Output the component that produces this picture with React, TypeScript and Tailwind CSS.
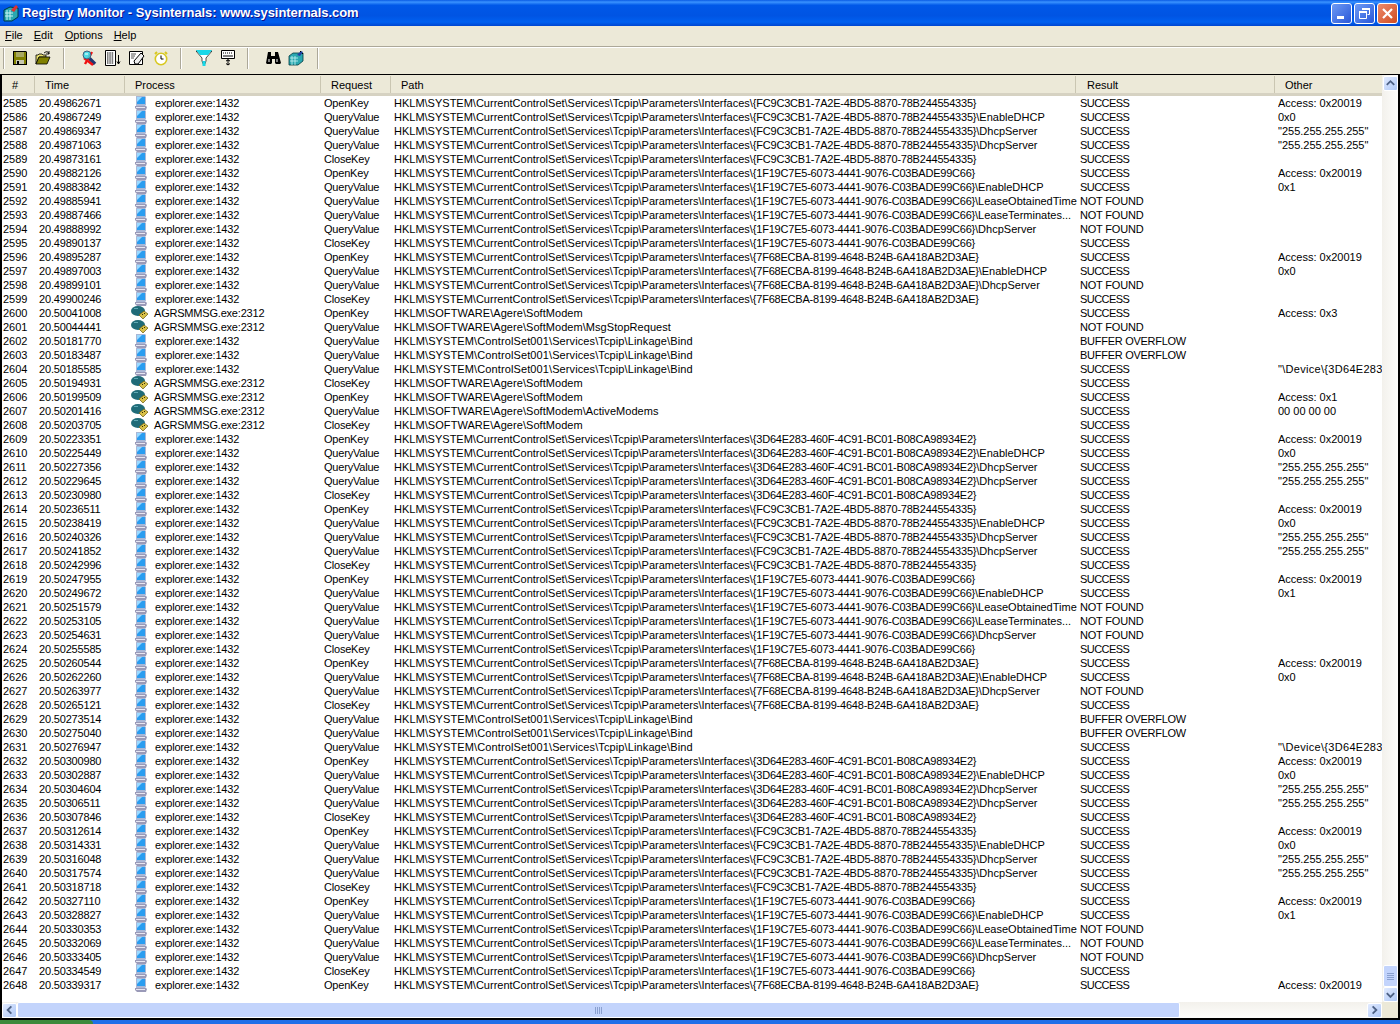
import React from 'react';

const FC = 'FC9C3CB1-7A2E-4BD5-8870-78B244554335';
const F1 = '1F19C7E5-6073-4441-9076-C03BADE99C66';
const F7 = '7F68ECBA-8199-4648-B24B-6A418AB2D3AE';
const D3 = '3D64E283-460F-4C91-BC01-B08CA98934E2';
const IFACE = 'HKLM\\SYSTEM\\CurrentControlSet\\Services\\Tcpip\\Parameters\\Interfaces\\';
const BIND = 'HKLM\\SYSTEM\\ControlSet001\\Services\\Tcpip\\Linkage\\Bind';
const MODEM = 'HKLM\\SOFTWARE\\Agere\\SoftModem';
const ACCESS = 'Access: 0x20019';
const IP = '"255.255.255.255"';
const DEV = '"\\Device\\{3D64E283';
const OK = 'SUCCESS';
const NF = 'NOT FOUND';
const BO = 'BUFFER OVERFLOW';

type Row = { t: string; agr?: boolean; req: string; guid?: string; path: string; suffix?: string; res: string; other: string };

const open = (t: string, g: string): Row => ({ t, req: 'OpenKey', path: IFACE, guid: g, res: OK, other: ACCESS });
const close = (t: string, g: string): Row => ({ t, req: 'CloseKey', path: IFACE, guid: g, res: OK, other: '' });
const val = (t: string, g: string, s: string, res = OK, other = ''): Row => ({ t, req: 'QueryValue', path: IFACE, guid: g, suffix: s, res, other });
const bind = (t: string, res: string, other = ''): Row => ({ t, req: 'QueryValue', path: BIND, res, other });
const agr = (t: string, req: string, s: string, res = OK, other = ''): Row => ({ t, agr: true, req, path: MODEM + s, res, other });

const EN = '\\EnableDHCP';
const DH = '\\DhcpServer';
const LO = '\\LeaseObtainedTime';
const LT = '\\LeaseTerminates...';

const rows: Row[] = [
  open('49862671', FC), val('49867249', FC, EN, OK, '0x0'), val('49869347', FC, DH, OK, IP), val('49871063', FC, DH, OK, IP), close('49873161', FC),
  open('49882126', F1), val('49883842', F1, EN, OK, '0x1'), val('49885941', F1, LO, NF), val('49887466', F1, LT, NF), val('49888992', F1, DH, NF), close('49890137', F1),
  open('49895287', F7), val('49897003', F7, EN, OK, '0x0'), val('49899101', F7, DH, NF), close('49900246', F7),
  agr('50041008', 'OpenKey', '', OK, 'Access: 0x3'), agr('50044441', 'QueryValue', '\\MsgStopRequest', NF),
  bind('50181770', BO), bind('50183487', BO), bind('50185585', OK, DEV),
  agr('50194931', 'CloseKey', ''), agr('50199509', 'OpenKey', '', OK, 'Access: 0x1'), agr('50201416', 'QueryValue', '\\ActiveModems', OK, '00 00 00 00'), agr('50203705', 'CloseKey', ''),
  open('50223351', D3), val('50225449', D3, EN, OK, '0x0'), val('50227356', D3, DH, OK, IP), val('50229645', D3, DH, OK, IP), close('50230980', D3),
  open('50236511', FC), val('50238419', FC, EN, OK, '0x0'), val('50240326', FC, DH, OK, IP), val('50241852', FC, DH, OK, IP), close('50242996', FC),
  open('50247955', F1), val('50249672', F1, EN, OK, '0x1'), val('50251579', F1, LO, NF), val('50253105', F1, LT, NF), val('50254631', F1, DH, NF), close('50255585', F1),
  open('50260544', F7), val('50262260', F7, EN, OK, '0x0'), val('50263977', F7, DH, NF), close('50265121', F7),
  bind('50273514', BO), bind('50275040', BO), bind('50276947', OK, DEV),
  open('50300980', D3), val('50302887', D3, EN, OK, '0x0'), val('50304604', D3, DH, OK, IP), val('50306511', D3, DH, OK, IP), close('50307846', D3),
  open('50312614', FC), val('50314331', FC, EN, OK, '0x0'), val('50316048', FC, DH, OK, IP), val('50317574', FC, DH, OK, IP), close('50318718', FC),
  open('50327110', F1), val('50328827', F1, EN, OK, '0x1'), val('50330353', F1, LO, NF), val('50332069', F1, LT, NF), val('50333405', F1, DH, NF), close('50334549', F1),
  open('50339317', F7),
];

function ExplorerIcon() {
  return (
    <svg width="12" height="14" viewBox="0 0 12 14" className="shrink-0">
      <path d="M1 0h9l1 1v8l-1 1H1z" fill="#a9b7d6" />
      <path d="M2 1h8v7H2z" fill="#2a9df0" />
      <path d="M2 1h5L2 6z" fill="#9bd9ff" />
      <path d="M0 10h11l1 1-1 3H2l-2-2z" fill="#9a9ab8" />
      <path d="M1 11h9v1H1z" fill="#e6e6f2" />
    </svg>
  );
}

function ModemIcon() {
  return (
    <svg width="18" height="14" viewBox="0 0 18 14" className="shrink-0">
      <ellipse cx="7" cy="5" rx="7" ry="5" fill="#1f6b78" />
      <path d="M3 2h4v1H3z" fill="#5fa8b4" />
      <path d="M8 9l5-4 4 3-5 5z" fill="#d8c048" stroke="#6a5a10" strokeWidth="0.7" />
      <path d="M11 8h1v1h-1zM13 7h1v1h-1z" fill="#332a00" />
    </svg>
  );
}

function ToolSep() {
  return <div className="w-[2px] h-[21px] border-l border-[#aca899] border-r-[#fff] border-r shrink-0" />;
}

function Tool({ children }: { children: React.ReactNode }) {
  return <div className="w-[16px] h-[16px] shrink-0 flex items-center justify-center">{children}</div>;
}

function Toolbar() {
  return (
    <div className="h-[26px] shrink-0 flex items-center pl-[3px] pb-[6px]">
      <ToolSep />
      <div className="flex gap-[7px] ml-[7px]">
        <Tool>
          <svg width="16" height="16" viewBox="0 0 16 16">
            <path d="M1 1h13l1 1v13H1z" fill="#000" />
            <path d="M2 2h12v12H2z" fill="#808000" />
            <path d="M4 2h8v5H4z" fill="#a8a860" />
            <path d="M4 10h8v4H4z" fill="#c8c8b0" />
            <path d="M5 11h2v3H5z" fill="#000" />
          </svg>
        </Tool>
        <Tool>
          <svg width="16" height="16" viewBox="0 0 16 16">
            <path d="M1 5h2l1-1h3l1 1h3v2H4l-3 7z" fill="#e8e070" stroke="#000" strokeWidth="0.8" />
            <path d="M1 14l3-7h11l-3 7z" fill="#808000" stroke="#000" strokeWidth="0.8" />
            <path d="M9 3q2-2 4-1l1 2M14 1v3h-3" fill="none" stroke="#000" strokeWidth="0.9" />
          </svg>
        </Tool>
      </div>
      <div className="ml-[12px]"><ToolSep /></div>
      <div className="flex gap-[8px] ml-[16px]">
        <Tool>
          <svg width="16" height="16" viewBox="0 0 16 16">
            <path d="M8 8l6 6" stroke="#203870" strokeWidth="3.5" />
            <path d="M3 8l9 7M11 2L4 14" stroke="#f01010" strokeWidth="2.4" />
            <circle cx="6" cy="5" r="4" fill="#30d8e8" fillOpacity="0.85" stroke="#406080" />
            <path d="M4 4h3" stroke="#fff" />
          </svg>
        </Tool>
        <Tool>
          <svg width="16" height="16" viewBox="0 0 16 16">
            <path d="M0.5 0.5h10v15h-10z" fill="#fff" stroke="#000" />
            <path d="M2 3h7M2 5h7M2 7h7M2 9h7M2 11h7M2 13h7" stroke="#000" strokeDasharray="1.5 0.8" />
            <path d="M13.5 5v9M12 11.5l1.5 2.5 1.5-2.5" stroke="#000" fill="none" />
          </svg>
        </Tool>
        <Tool>
          <svg width="16" height="16" viewBox="0 0 16 16">
            <path d="M0.5 1.5h13v13h-13z" fill="#fff" stroke="#000" />
            <path d="M2 4h5M2 6h4M2 8h3" stroke="#555" />
            <path d="M5 11l7-8 3 3-6 8H6z" fill="#f0f0f0" stroke="#000" />
          </svg>
        </Tool>
        <Tool>
          <svg width="16" height="16" viewBox="0 0 16 16">
            <circle cx="8" cy="9" r="5.7" fill="#fff" stroke="#d8c820" strokeWidth="1.6" />
            <path d="M8 5.5V9h2.5" stroke="#000" fill="none" />
            <path d="M2 4l2-2M14 4l-2-2" stroke="#d8c820" strokeWidth="2" />
          </svg>
        </Tool>
      </div>
      <div className="ml-[11px]"><ToolSep /></div>
      <div className="flex gap-[8px] ml-[14px]">
        <Tool>
          <svg width="16" height="16" viewBox="0 0 16 16">
            <path d="M0 1h16l-6 7v3L8 16l-2-5V8z" fill="#fff" stroke="#000" strokeWidth="0.7" />
            <path d="M0 0h16l-4 5H4z" fill="#18d8e8" />
            <path d="M6.5 11h3v5h-3z" fill="#18d8e8" />
          </svg>
        </Tool>
        <Tool>
          <svg width="16" height="16" viewBox="0 0 16 16">
            <path d="M1.5 0.5h13v8h-13z" fill="#fff" stroke="#000" />
            <path d="M3 3h1M5 3h1M7 3h1M9 3h1M11 3h1M3 6h10" stroke="#000" />
            <path d="M8 9v6M6 11l2-1 2 1M6 13.5l2 1.5 2-1.5" stroke="#000" fill="none" />
          </svg>
        </Tool>
      </div>
      <div className="ml-[11px]"><ToolSep /></div>
      <div className="flex gap-[7px] ml-[16px]">
        <Tool>
          <svg width="16" height="16" viewBox="0 0 16 16">
            <path d="M3 2h3v4h4V2h3l3 11-1 1h-4l-1-1V9H7v4l-1 1H2l-1-1z" fill="#000" />
            <path d="M3 9h2v3H3zM11 9h2v3h-2z" fill="#808080" />
          </svg>
        </Tool>
        <Tool>
          <svg width="16" height="16" viewBox="0 0 16 16">
            <path d="M1 6l4-3 10 0v8l-5 4H1z" fill="#2aa8b0" stroke="#003840" strokeWidth="0.8" />
            <path d="M2 8h8M2 11h8M4 6v9M7 6v9" stroke="#c8f4f4" strokeWidth="0.8" />
            <path d="M9 5l4-4 2 1-3 4z" fill="#2040a0" />
            <path d="M12 1h1v1h-1zM14 3h1v1h-1z" fill="#000" />
          </svg>
        </Tool>
      </div>
      <div className="ml-[13px]"><ToolSep /></div>
    </div>
  );
}

function Th({ w, pl, label, last }: { w: string; pl: string; label: string; last?: boolean }) {
  return (
    <div className={`${w} ${pl} h-[17px] mt-[1px] shrink-0 overflow-hidden whitespace-nowrap leading-[18px] ${last ? '' : 'border-r border-r-[#cac6b2]'}`}>
      {label}
    </div>
  );
}

function Chevron({ dir }: { dir: 'up' | 'down' | 'left' | 'right' }) {
  const d = {
    up: 'M3 8l4-4 4 4',
    down: 'M3 5l4 4 4-4',
    left: 'M9 3L5 7l4 4',
    right: 'M5 3l4 4-4 4',
  }[dir];
  return (
    <svg width="14" height="14" viewBox="0 0 14 14">
      <path d={d} fill="none" stroke="#4d6185" strokeWidth="2" />
    </svg>
  );
}

function ScrollBtn({ dir }: { dir: 'up' | 'down' | 'left' | 'right' }) {
  return (
    <div className="w-[15px] h-[15px] shrink-0 rounded-[2px] border border-white bg-gradient-to-br from-[#e1eafe] to-[#aec8f7] flex items-center justify-center">
      <Chevron dir={dir} />
    </div>
  );
}

function resultClass(res: string) {
  if (res === OK) return 'tracking-[-0.55px]';
  if (res === NF) return 'tracking-[-0.2px]';
  return 'tracking-[-0.27px]';
}

export default function App() {
  return (
    <div className="w-[1400px] h-[1024px] overflow-hidden flex flex-col bg-[#ece9d8] text-black text-[11px] font-['Liberation_Sans',sans-serif]">
      {/* title bar */}
      <div className="h-[26px] shrink-0 flex items-center pl-[2px] pr-[2px] bg-[linear-gradient(180deg,#0a5be4_0%,#3a93ff_8%,#0058e8_20%,#0054e3_60%,#0060f0_85%,#0046d0_100%)]">
        <svg width="18" height="18" viewBox="0 0 18 18" className="shrink-0">
          <path d="M2 6l6-3 8 1v9l-6 4H2z" fill="#2aa8b0" stroke="#003840" />
          <path d="M3 9h8M3 12h8M5 6v10M8 6v10" stroke="#c8f4f4" />
          <path d="M9 6l5-5 2 2-4 5z" fill="#e03030" />
        </svg>
        <div className="ml-[2px] flex-1 text-white font-bold text-[13px] tracking-[-0.06px] [text-shadow:1px_1px_0_#0f1089]">
          Registry Monitor - Sysinternals: www.sysinternals.com
        </div>
        <div className="flex gap-[2px]">
          <div className="w-[21px] h-[21px] rounded-[3px] border border-white bg-gradient-to-br from-[#6f9af4] to-[#2a56d8] relative flex items-end pl-[5px] pb-[4px]">
            <div className="w-[7px] h-[3px] bg-white" />
          </div>
          <div className="w-[21px] h-[21px] rounded-[3px] border border-white bg-gradient-to-br from-[#6f9af4] to-[#2a56d8] flex items-center justify-center">
            <svg width="13" height="13" viewBox="0 0 13 13">
              <path d="M4.5 1.5h7v6h-2M1.5 4.5h7v7h-7z" fill="none" stroke="#fff" />
              <path d="M4 1h8v2H4zM1 4h8v2H1z" fill="#fff" />
            </svg>
          </div>
          <div className="w-[21px] h-[21px] rounded-[3px] border border-white bg-gradient-to-br from-[#ec8a6a] to-[#d04a1c] flex items-center justify-center">
            <svg width="13" height="13" viewBox="0 0 13 13">
              <path d="M2 2l9 9M11 2l-9 9" stroke="#fff" strokeWidth="2.2" />
            </svg>
          </div>
        </div>
      </div>

      {/* menu */}
      <div className="h-[20px] shrink-0 flex items-center pl-[5px] pb-[2px]">
        <span><u>F</u>ile</span>
        <span className="ml-[11px]"><u>E</u>dit</span>
        <span className="ml-[12px]"><u>O</u>ptions</span>
        <span className="ml-[11px]"><u>H</u>elp</span>
      </div>
      <div className="h-[2px] shrink-0 border-t border-[#aca899] border-b border-b-white" />

      <Toolbar />

      {/* list view */}
      <div className="flex-1 min-h-0 border-t border-t-black border-l-2 border-l-black border-r-2 border-r-black border-b-2 border-b-black flex flex-col">
        <div className="flex-1 min-h-0 flex">
          <div className="flex-1 min-w-0 flex flex-col">
            <div className="h-[21px] shrink-0 flex bg-[#ece9d8] border-b-[3px] border-[#d6d2c2]">
              <Th w="w-[33px]" pl="pl-[10px]" label="#" />
              <Th w="w-[90px]" pl="pl-[10px]" label="Time" />
              <Th w="w-[196px]" pl="pl-[10px]" label="Process" />
              <Th w="w-[70px]" pl="pl-[10px]" label="Request" />
              <Th w="w-[685px]" pl="pl-[10px]" label="Path" />
              <Th w="w-[199px]" pl="pl-[11px]" label="Result" />
              <Th w="w-[107px]" pl="pl-[10px]" label="Other" last />
            </div>
            <div className="flex-1 min-h-0 bg-white overflow-hidden">
              {rows.map((r, i) => (
                <div key={r.t} className="h-[14px] flex items-center whitespace-nowrap leading-[14px]">
                  <div className="w-[37px] pl-[1px] shrink-0">{2585 + i}</div>
                  <div className="w-[94px] shrink-0 tracking-[-0.18px]">20.{r.t}</div>
                  <div className="w-[191px] shrink-0 flex items-center">
                    {r.agr ? (
                      <div className="-ml-[2px] mr-[5px] shrink-0"><ModemIcon /></div>
                    ) : (
                      <div className="ml-[2px] w-[12px] mr-[8px] shrink-0"><ExplorerIcon /></div>
                    )}
                    <span className="tracking-[-0.2px]">{r.agr ? 'AGRSMMSG.exe:2312' : 'explorer.exe:1432'}</span>
                  </div>
                  <div className="w-[70px] shrink-0 tracking-[-0.2px]">{r.req}</div>
                  <div className="w-[686px] shrink-0 overflow-hidden">
                    {r.guid ? (
                      <>
                        {r.path}
                        <span className="tracking-[-0.22px]">{'{' + r.guid + '}'}</span>
                        {r.suffix}
                      </>
                    ) : (
                      <span className={r.path === BIND ? 'tracking-[0.11px]' : 'tracking-[0.05px]'}>{r.path}</span>
                    )}
                  </div>
                  <div className={`w-[198px] shrink-0 ${resultClass(r.res)}`}>{r.res}</div>
                  <div className={`w-[105px] shrink-0 overflow-hidden ${r.other === DEV ? 'tracking-[0.3px]' : ''}`}>{r.other}</div>
                </div>
              ))}
            </div>
          </div>
          {/* vertical scrollbar */}
          <div className="w-[16px] shrink-0 bg-gradient-to-r from-[#f3f1ec] to-[#fdfdfb] flex flex-col items-center pt-[1px]">
            <ScrollBtn dir="up" />
            <div className="flex-1" />
            <div className="w-[15px] h-[22px] rounded-[2px] border border-white bg-[#c3d4fc] flex flex-col items-center justify-center gap-[1px]">
              <div className="w-[7px] h-[1px] bg-[#8aa0d0]" />
              <div className="w-[7px] h-[1px] bg-[#8aa0d0]" />
              <div className="w-[7px] h-[1px] bg-[#8aa0d0]" />
              <div className="w-[7px] h-[1px] bg-[#8aa0d0]" />
            </div>
            <ScrollBtn dir="down" />
          </div>
        </div>
        {/* horizontal scrollbar */}
        <div className="h-[16px] shrink-0 flex">
          <div className="flex-1 min-w-0 flex items-center bg-gradient-to-b from-[#f3f1ec] to-[#fdfdfb]">
            <ScrollBtn dir="left" />
            <div className="w-[1163px] h-[16px] rounded-[2px] border border-white bg-[#c3d4fc] flex items-center justify-center gap-[1px]">
              <div className="w-[1px] h-[7px] bg-[#8aa0d0]" />
              <div className="w-[1px] h-[7px] bg-[#8aa0d0]" />
              <div className="w-[1px] h-[7px] bg-[#8aa0d0]" />
              <div className="w-[1px] h-[7px] bg-[#8aa0d0]" />
            </div>
            <div className="flex-1" />
            <ScrollBtn dir="right" />
          </div>
          <div className="w-[16px] shrink-0 bg-[#ece9d8]" />
        </div>
      </div>

      {/* taskbar edge */}
      <div className="h-[4px] shrink-0 flex bg-[#1f6fe8]">
        <div className="w-[93px] rounded-tr-[6px] bg-[#3c8a3c]" />
      </div>
    </div>
  );
}
